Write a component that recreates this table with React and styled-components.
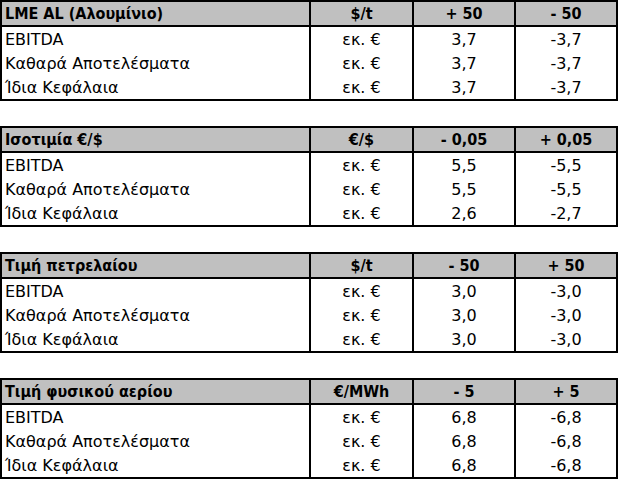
import React from "react";
import styled, { createGlobalStyle } from "styled-components";

const GlobalStyle = createGlobalStyle`
  html, body {
    margin: 0;
    padding: 0;
    background: #ffffff;
  }
  body {
    font-family: "DejaVu Sans", "Liberation Sans", sans-serif;
    color: #000;
  }
`;

const Page = styled.div`
  display: flex;
  flex-direction: column;
  gap: 25px;
  width: 618px;
`;

const Table = styled.div`
  border: 2px solid #000;
  display: flex;
  flex-direction: column;
`;

const Row = styled.div`
  display: grid;
  grid-template-columns: 307px 103px 102px 102px;
  height: ${p => (p.head ? "23px" : "24px")};
  background: ${p => (p.head ? "#c0c0c0" : "#fff")};
  border-bottom: ${p => (p.head ? "2px solid #000" : "none")};
`;

const Cell = styled.div`
  display: flex;
  align-items: center;
  justify-content: ${p => (p.first ? "flex-start" : "center")};
  padding-left: ${p => (p.first ? "3px" : "0")};
  border-left: ${p => (p.first ? "none" : "2px solid #000")};
  font-size: 16px;
  white-space: nowrap;
`;

const HeadCell = styled(Cell)`
  font-family: "DejaVu Sans Condensed", "DejaVu Sans", sans-serif;
  font-stretch: condensed;
  font-weight: bold;
  font-size: 16px;
`;

const tables = [
  {
    head: ["LME AL (Αλουμίνιο)", "$/t", "+ 50", "- 50"],
    rows: [
      ["3,7", "-3,7"],
      ["3,7", "-3,7"],
      ["3,7", "-3,7"]
    ]
  },
  {
    head: ["Ισοτιμία €/$", "€/$", "- 0,05", "+ 0,05"],
    rows: [
      ["5,5", "-5,5"],
      ["5,5", "-5,5"],
      ["2,6", "-2,7"]
    ]
  },
  {
    head: ["Τιμή πετρελαίου", "$/t", "- 50", "+ 50"],
    rows: [
      ["3,0", "-3,0"],
      ["3,0", "-3,0"],
      ["3,0", "-3,0"]
    ]
  },
  {
    head: ["Τιμή φυσικού αερίου", "€/MWh", "- 5", "+ 5"],
    rows: [
      ["6,8", "-6,8"],
      ["6,8", "-6,8"],
      ["6,8", "-6,8"]
    ]
  }
];

const labels = ["EBITDA", "Καθαρά Αποτελέσματα", "Ίδια Κεφάλαια"];

export default function App() {
  return (
    <>
      <GlobalStyle />
      <Page>
        {tables.map((t, i) => (
          <Table key={i}>
            <Row head>
              {t.head.map((h, j) => (
                <HeadCell key={j} first={j === 0}>
                  {h}
                </HeadCell>
              ))}
            </Row>
            {t.rows.map((r, k) => (
              <Row key={k}>
                <Cell first>{labels[k]}</Cell>
                <Cell>εκ. €</Cell>
                <Cell>{r[0]}</Cell>
                <Cell>{r[1]}</Cell>
              </Row>
            ))}
          </Table>
        ))}
      </Page>
    </>
  );
}
